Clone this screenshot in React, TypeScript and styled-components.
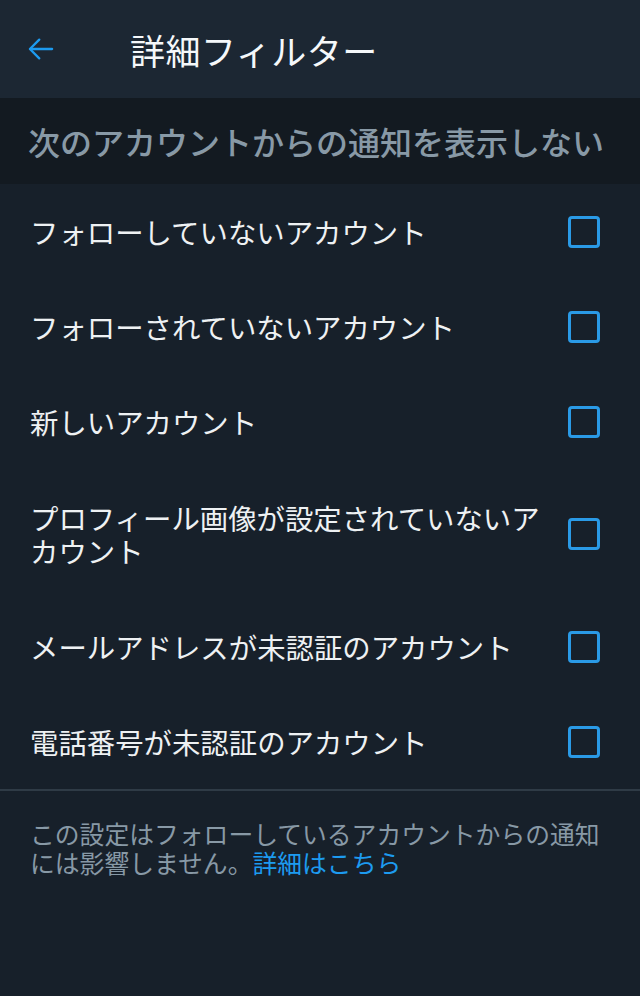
import React from "react";
import styled, { createGlobalStyle } from "styled-components";

const GlobalStyle = createGlobalStyle`
  html, body {
    margin: 0;
    padding: 0;
    background: #17202a;
  }
  body {
    font-family: "Noto Sans CJK JP", "Noto Sans", sans-serif;
  }
`;

const Page = styled.div`
  width: 640px;
  min-height: 996px;
  background: #17202a;
  color: #f5f8fa;
`;

const Header = styled.header`
  height: 98px;
  display: flex;
  align-items: center;
  padding-left: 26px;
  background: #1c2733;
  box-sizing: border-box;
`;

const BackButton = styled.button`
  width: 30px;
  height: 34px;
  padding: 0;
  border: none;
  background: none;
  display: flex;
  align-items: center;
  justify-content: center;
  margin-right: 74px;
  color: #1d9bf0;
`;

const Title = styled.h1`
  margin: 0;
  font-size: 35px;
  font-weight: 400;
  line-height: 1;
  color: #f5f8fa;
  letter-spacing: 0.5px;
`;

const SectionHeader = styled.div`
  height: 86px;
  display: flex;
  align-items: center;
  padding-left: 28px;
  background: #131a21;
  color: #8899a6;
  font-size: 32px;
  font-weight: 500;
`;

const List = styled.ul`
  list-style: none;
  margin: 0;
  padding: 0;
  border-bottom: 2px solid #2f3b46;
`;

const Row = styled.li<{ $tall?: boolean }>`
  height: ${(p) => (p.$tall ? 130 : 95)}px;
  display: flex;
  align-items: center;
  justify-content: space-between;
  padding: 0 40px 0 30px;
`;

const Label = styled.span`
  max-width: 520px;
  font-size: 28.4px;
  line-height: 33px;
  color: #eef1f3;
`;

const Checkbox = styled.span`
  width: 32px;
  height: 32px;
  box-sizing: border-box;
  border: 3px solid #2a9ae6;
  border-radius: 4px;
  flex-shrink: 0;
`;

const Footer = styled.p`
  margin: 0;
  padding: 28px 30px;
  font-size: 24.8px;
  line-height: 29px;
  color: #8899a6;
`;

const Link = styled.a`
  color: #1d9bf0;
  text-decoration: none;
`;

const options = [
  { label: "フォローしていないアカウント" },
  { label: "フォローされていないアカウント" },
  { label: "新しいアカウント" },
  { label: "プロフィール画像が設定されていないアカウント", tall: true },
  { label: "メールアドレスが未認証のアカウント" },
  { label: "電話番号が未認証のアカウント" },
];

export default function App() {
  return (
    <Page>
      <GlobalStyle />
      <Header>
        <BackButton aria-label="戻る">
          <svg width="28" height="28" viewBox="0 0 24 24" fill="none" stroke="currentColor" strokeWidth="2" strokeLinecap="round" strokeLinejoin="round">
            <path d="M21.5 12H3" />
            <path d="M10.5 4L2.5 12l8 8" />
          </svg>
        </BackButton>
        <Title>詳細フィルター</Title>
      </Header>
      <SectionHeader>次のアカウントからの通知を表示しない</SectionHeader>
      <List>
        {options.map((o) => (
          <Row key={o.label} $tall={o.tall}>
            <Label>{o.label}</Label>
            <Checkbox />
          </Row>
        ))}
      </List>
      <Footer>
        この設定はフォローしているアカウントからの通知には影響しません。<Link href="#">詳細はこちら</Link>
      </Footer>
    </Page>
  );
}
